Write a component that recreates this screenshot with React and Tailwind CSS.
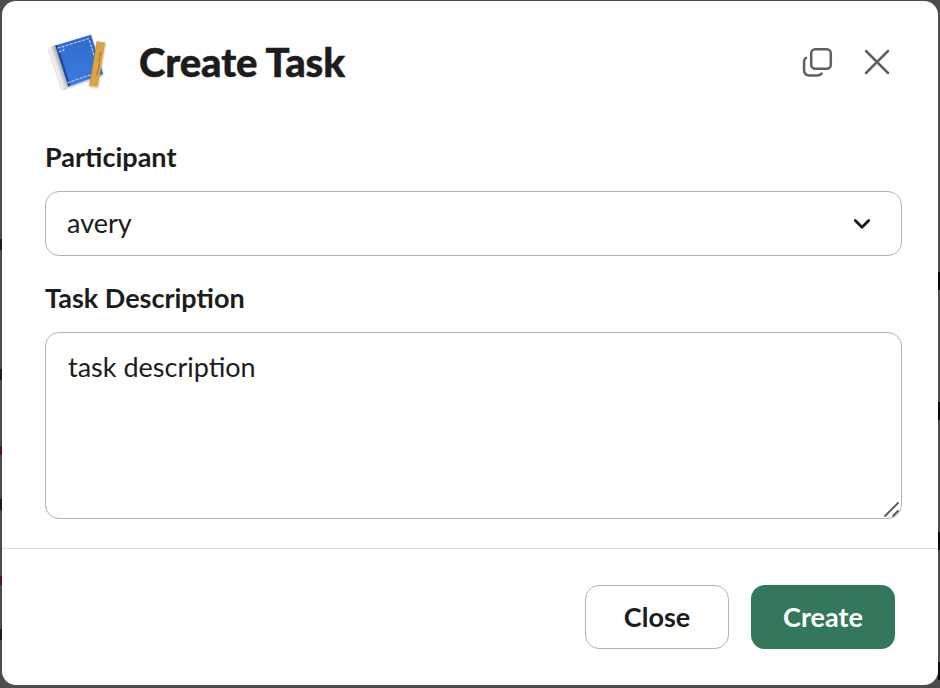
function TaskLogo() {
  return (
    <svg width="64" height="64" viewBox="46 31 64 64" className="mt-[2px] shrink-0" aria-hidden="true">
      <defs>
        <linearGradient id="cover" x1="0" y1="0" x2="0" y2="1">
          <stop offset="0" stopColor="#2f69ca" />
          <stop offset="1" stopColor="#3d7cdf" />
        </linearGradient>
        <linearGradient id="pages" x1="52" y1="67" x2="61" y2="64" gradientUnits="userSpaceOnUse">
          <stop offset="0" stopColor="#cfcfcf" />
          <stop offset="0.3" stopColor="#fafafa" />
          <stop offset="0.6" stopColor="#e2e2e2" />
          <stop offset="1" stopColor="#a8a8a8" />
        </linearGradient>
        <filter id="shade" x="-20%" y="-20%" width="140%" height="140%">
          <feDropShadow dx="0" dy="1" stdDeviation="1" floodOpacity="0.35" />
        </filter>
      </defs>
      <g filter="url(#shade)">
        <path d="M48.6 47.3 55 45.5 69 86 62.5 88.8Z" fill="url(#pages)" />
        <path d="M55.3 45.5 91 34.7 103.2 74 68.5 86.5Z" fill="url(#cover)" />
      </g>
      <path d="M55.3 45.5 57.5 44.9 70.5 85.7 68.5 86.5Z" fill="#1c479d" />
      <path d="M57.5 48.2 88.8 38.6 98 68M67.5 82.8 93 74M58.5 52 64 50.3 63.5 47" fill="none" stroke="#dce8ff" strokeWidth="0.9" strokeDasharray="3 1.3" />
      <g filter="url(#shade)">
        <path d="M97 41.3 105.3 42.5 97.8 86.8 89.3 85.5Z" fill="#dca446" />
      </g>
      <path d="M97 41.8 89.6 85.3" stroke="#b97d25" strokeWidth="1" strokeDasharray="1 1.4" />
      <path d="M100.8 52 Q99 56 99.3 61 T96.5 76" stroke="#8d6424" strokeWidth="0.9" strokeDasharray="5 1" fill="none" />
    </svg>
  );
}

function PopoutIcon() {
  return (
    <svg width="32" height="32" viewBox="801 46 32 32" fill="none" stroke="#616061" strokeWidth="2.5" strokeLinecap="round" aria-hidden="true">
      <rect x="811.2" y="49.2" width="19.6" height="19.6" rx="4" />
      <path d="M806 57.8 Q804.1 58.8 804.1 61.5 V70 Q804.1 75.4 809.5 75.4 H817 Q820.4 75.4 821.6 73.5" />
    </svg>
  );
}

// Slivers of the dimmed message list that show past the dialog's edges.
function LeftEdge() {
  return (
    <div className="flex w-[2px] shrink-0 flex-col pt-[238px]" aria-hidden="true">
      {[0, 1, 2, 3].map((row) => (
        <div key={row} className="flex h-[130px] shrink-0 flex-col gap-[66px]">
          <i className="h-[11px] w-[2px] shrink-0 bg-[#1c1c1c]" />
          {row > 0 && row < 3 && <i className="h-[9px] w-[2px] shrink-0 bg-[#5c1030]" />}
        </div>
      ))}
    </div>
  );
}

function RightEdge() {
  return (
    <div className="flex w-[2px] shrink-0 flex-col gap-[112px] pt-[271px]" aria-hidden="true">
      {[0, 1, 2, 3].map((row) => (
        <i key={row} className="h-[18px] w-[2px] shrink-0 bg-[#0a0a0a]" />
      ))}
    </div>
  );
}

export default function App() {
  return (
    <main className="flex h-[688px] w-[940px] overflow-hidden bg-[#4d4c4d] pt-px font-['Lato',sans-serif] text-[#1d1c1d]">
      <LeftEdge />
      <section className="flex h-[684px] grow flex-col rounded-[14px] bg-white" role="dialog" aria-labelledby="title">
        <header className="flex h-[122px] shrink-0 items-center pl-[44px] pr-[47px]">
          <TaskLogo />
          <h1 id="title" className="ml-[29px] grow text-[40px] leading-[50px] font-black tracking-[-0.1px] [-webkit-text-stroke:0.5px_#1d1c1d]">Create Task</h1>
          <button aria-label="Open in new window"><PopoutIcon /></button>
          <button className="ml-[30px]" aria-label="Dismiss">
            <svg width="28" height="28" viewBox="0 0 28 28" fill="none" stroke="#616061" strokeWidth="2.5" strokeLinecap="round">
              <path d="M3 3 25 25M25 3 3 25" />
            </svg>
          </button>
        </header>
        <div className="flex grow flex-col pr-[36px] pl-[43px] pt-[16px]">
          <label className="text-[27px] leading-[36px] font-bold">Participant</label>
          <button className="mt-[16px] flex h-[65px] shrink-0 items-center justify-between rounded-[14px] border border-[#b4b4b5] pr-[30px] pl-[21px] text-left text-[27px]">
            avery
            <svg width="18" height="12" viewBox="0 0 18 12" fill="none" stroke="#1d1c1d" strokeWidth="2.8" strokeLinecap="round" strokeLinejoin="round">
              <path d="M2.3 2.5 9 9.3 15.7 2.5" />
            </svg>
          </button>
          <label className="mt-[24px] text-[27px] leading-[36px] font-bold">Task Description</label>
          <div className="mt-[16px] flex h-[187px] shrink-0 items-start justify-between rounded-[14px] border border-[#b4b4b5] pt-[16px] pl-[22px] text-[27px] leading-[36px]">
            task description
            <svg width="18" height="18" viewBox="0 0 18 18" fill="none" stroke="#565656" strokeWidth="1.8" className="self-end">
              <path d="M1.5 16.5 15.5 2.5M9.5 16.5 15.5 10.5" />
            </svg>
          </div>
        </div>
        <footer className="flex h-[137px] shrink-0 justify-end gap-[22px] border-t border-[#dddddd] pt-[36px] pr-[43px] text-[27px] font-bold">
          <button className="h-[64px] w-[144px] rounded-[14px] border border-[#b4b4b5]">Close</button>
          <button className="h-[64px] w-[144px] rounded-[14px] bg-[#34785c] text-white">Create</button>
        </footer>
      </section>
      <RightEdge />
    </main>
  );
}
